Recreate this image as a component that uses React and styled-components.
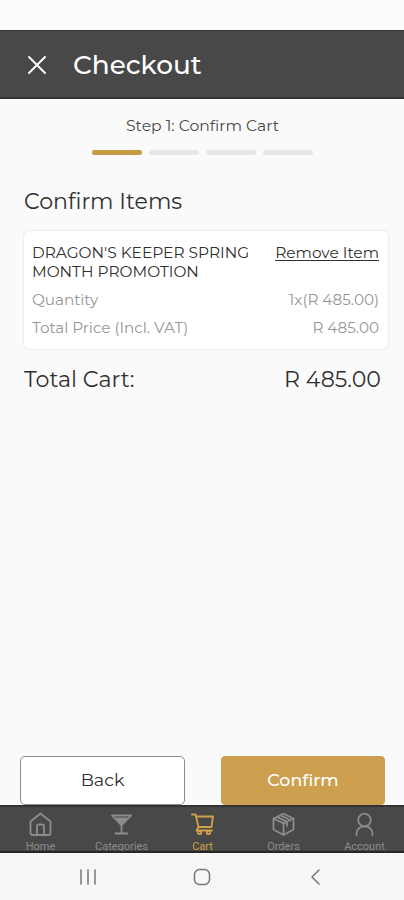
import React from "react";
import styled, { createGlobalStyle } from "styled-components";

const GlobalStyle = createGlobalStyle`
  * { box-sizing: border-box; }
  body {
    margin: 0;
    background: #fafafa;
    font-family: Montserrat, Inter, sans-serif;
    font-weight: 400;
    color: #262626;
  }
`;

const Screen = styled.div`
  display: flex;
  flex-direction: column;
  width: 404px;
  height: 900px;
  overflow: hidden;
  background: #fafafa;
`;

const StatusBar = styled.div`
  flex: none;
  height: 30px;
  background: #fbfbfb;
`;

const Header = styled.header`
  flex: none;
  display: flex;
  align-items: center;
  height: 69px;
  padding: 2px 0 0 27px;
  gap: 26px;
  background: #484848;
  border-top: 1px solid #3a3a3a;
  border-bottom: 2px solid #333;
  color: #fff;
`;

const Label = styled.span`
  display: block;
  margin: 0;
  font-size: ${(p) => p.$size}px;
  line-height: ${(p) => p.$line || 20}px;
  color: ${(p) => p.$color || "#303030"};
  font-weight: ${(p) => p.$weight || 400};
  text-decoration: ${(p) => (p.$underline ? "underline" : "none")};
  text-underline-offset: 2px;
  text-decoration-thickness: 1px;
  white-space: pre;
`;

const Content = styled.main`
  flex: 1;
  display: flex;
  flex-direction: column;
  padding: 17px 16px 0 24px;
`;

const Stepper = styled.section`
  display: flex;
  flex-direction: column;
  align-items: center;
  gap: 14px;
  margin-right: 7px;
`;

const StepBars = styled.div`
  display: flex;
  gap: 7px;
`;

const StepBar = styled.div`
  width: 50px;
  height: 5px;
  border-radius: 2px;
  background: ${(p) => (p.$active ? "#c59b46" : "#e7e7e7")};
`;

const SectionTitle = styled.div`
  margin: 34px 0 16px;
`;

const Card = styled.article`
  display: flex;
  flex-direction: column;
  height: 118px;
  padding: 13px 9px 0 8px;
  border-radius: 5px;
  background: #fff;
  box-shadow: 0 0 2px rgba(0, 0, 0, 0.18);
`;

const Row = styled.div`
  display: flex;
  justify-content: space-between;
  align-items: flex-start;
  margin-top: ${(p) => p.$top || 0}px;
  margin-right: ${(p) => p.$inset || 0}px;
`;

const Actions = styled.div`
  display: grid;
  grid-template-columns: 165px 164px;
  justify-content: space-between;
  margin: auto 3px 0 -4px;
`;

const Button = styled.button`
  display: flex;
  align-items: center;
  justify-content: center;
  height: 49px;
  padding: 0 0 1px;
  font-family: inherit;
  border-radius: ${(p) => (p.$primary ? 4 : 5)}px;
  border: 1px solid ${(p) => (p.$primary ? "#cb9d4d" : "#8d8d8d")};
  background: ${(p) => (p.$primary ? "#cda050" : "#fff")};
`;

const TabBar = styled.nav`
  flex: none;
  display: grid;
  grid-template-columns: repeat(5, 81px);
  height: 48px;
  overflow: hidden;
  background: #484848;
  border-top: 2px solid #333;
  border-bottom: 2px solid #262626;
`;

const Tab = styled.div`
  display: flex;
  flex-direction: column;
  align-items: center;
  padding: 5px 0 0;
  gap: 3px;
  color: ${(p) => (p.$active ? "#d0a04a" : "#8c8c8c")};
  font-family: Roboto, sans-serif;
  font-size: 11px;
  line-height: 13px;
`;

const SystemBar = styled.div`
  flex: none;
  display: grid;
  grid-template-columns: 176px 51px 177px;
  align-items: center;
  height: 47px;
  padding-top: 1px;
  background: #f6f6f6;
  color: #777;
`;

const SystemKey = styled.div`
  display: flex;
  justify-content: center;
`;

const Icon = styled.svg`
  display: block;
  flex: none;
  fill: none;
  stroke: currentColor;
  stroke-width: ${(p) => p.$weight || 1.5};
  stroke-linecap: round;
  stroke-linejoin: round;
`;

const tabs = [
  {
    name: "Home",
    art: <path d="M2.500 9.500 12.500 1.500l10 8V21q0 2-2 2h-16q-2 0-2-2ZM9 23v-9q0-1.500 1.500-1.500h4q1.500 0 1.500 1.500v9" />,
  },
  {
    name: "Categories",
    art: (
      <>
        <path d="M7 6.500h11l-5.500 6Z" fill="currentColor" />
        <path d="M3 3.500h19L12.500 13.500ZM12.500 13.500v8M6.500 21.500h12" />
      </>
    ),
  },
  {
    name: "Cart",
    active: true,
    art: (
      <>
        <path d="M2 2.500h3.500l3 12.500h13l1.500-10.500H6M8.500 15l-2 3.500H22" />
        <circle cx="9.500" cy="20.500" r="1.700" />
        <circle cx="18.500" cy="20.500" r="1.700" />
      </>
    ),
  },
  {
    name: "Orders",
    art: <path d="M12.500 1.700 22.500 6.500v11L12.500 23l-10-5.500v-11ZM2.500 6.500l10 5 10-5M12.500 11.500V23M6 4.900l10 5v4M9.500 3.200l10 5" />,
  },
  {
    name: "Account",
    art: (
      <>
        <circle cx="12.500" cy="8" r="6.300" />
        <path d="M4.500 23c0-5 2.500-8.700 8-8.700s8 3.700 8 8.700" />
      </>
    ),
  },
];

const details = [
  { name: "Quantity", value: "1x(R 485.00)", top: 9 },
  { name: "Total Price (Incl. VAT)", value: "R 485.00", top: 8 },
];

export default function App() {
  return (
    <>
      <GlobalStyle />
      <Screen>
        <StatusBar />
        <Header>
          <Icon width="20" height="20" viewBox="0 0 20 20" $weight={2}>
            <path d="m2 2 16 16M18 2 2 18" />
          </Icon>
          <Label as="h1" $size={26.3} $line={34} $color="#fff" $weight={500}>Checkout</Label>
        </Header>
        <Content>
          <Stepper>
            <Label $size={15.6} $color="#484848">Step 1: Confirm Cart</Label>
            <StepBars>
              <StepBar $active />
              <StepBar />
              <StepBar />
              <StepBar />
            </StepBars>
          </Stepper>
          <SectionTitle>
            <Label as="h2" $size={22.1} $line={26}>Confirm Items</Label>
          </SectionTitle>
          <Card>
            <Row>
              <Label $size={15.4} $line={18.5}>{"DRAGON'S KEEPER SPRING\nMONTH PROMOTION"}</Label>
              <Label $size={15.4} $line={18.5} $underline>Remove Item</Label>
            </Row>
            {details.map((d) => (
              <Row key={d.name} $top={d.top}>
                <Label $size={15.2} $color="#969696">{d.name}</Label>
                <Label $size={15.2} $color="#969696">{d.value}</Label>
              </Row>
            ))}
          </Card>
          <Row $top={17} $inset={7}>
            <Label $size={22.2} $line={28}>Total Cart:</Label>
            <Label $size={22.1} $line={28}>R 485.00</Label>
          </Row>
          <Actions>
            <Button><Label $size={17.5}>Back</Label></Button>
            <Button $primary><Label $size={17.4} $color="#fff" $weight={500}>Confirm</Label></Button>
          </Actions>
        </Content>
        <TabBar>
          {tabs.map((t) => (
            <Tab key={t.name} $active={t.active}>
              <Icon width="25" height="25" viewBox="0 0 25 25" $weight={1.8}>{t.art}</Icon>
              {t.name}
            </Tab>
          ))}
        </TabBar>
        <SystemBar>
          <SystemKey>
            <Icon width="18" height="18" viewBox="0 0 18 18">
              <path d="M2 2v14M9 2v14M16 2v14" />
            </Icon>
          </SystemKey>
          <SystemKey>
            <Icon width="18" height="18" viewBox="0 0 18 18">
              <rect x="1.500" y="1.500" width="15" height="15" rx="5" />
            </Icon>
          </SystemKey>
          <SystemKey>
            <Icon width="18" height="18" viewBox="0 0 18 18">
              <path d="m12 2-7 7 7 7" />
            </Icon>
          </SystemKey>
        </SystemBar>
      </Screen>
    </>
  );
}
